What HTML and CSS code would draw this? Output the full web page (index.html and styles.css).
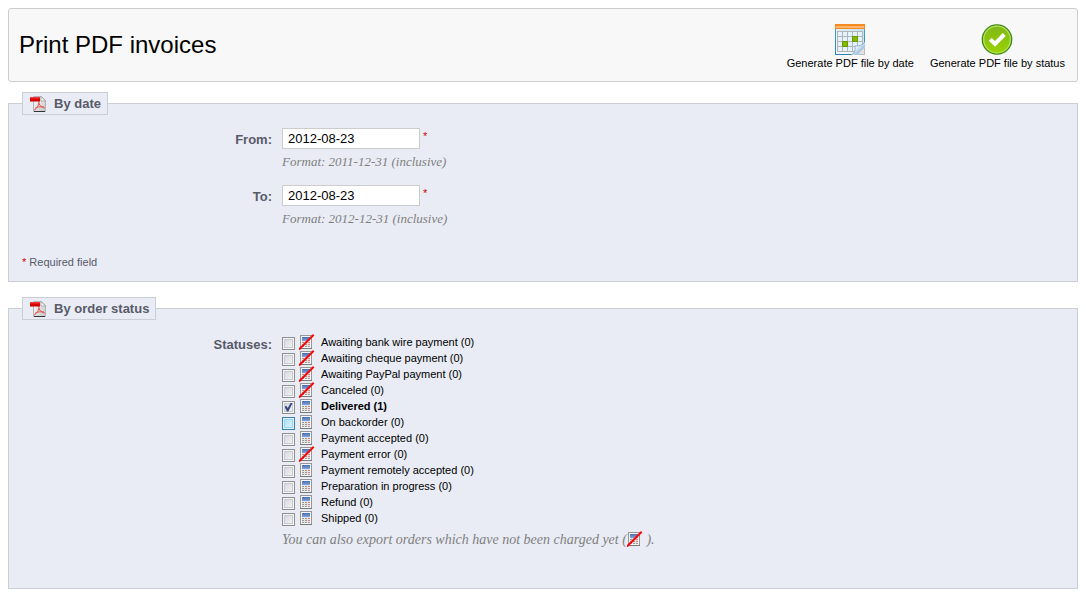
FILE: index.html
```html
<!DOCTYPE html>
<html lang="en">
<head>
<meta charset="utf-8">
<title>Print PDF invoices</title>
<link rel="stylesheet" href="styles.css">
</head>
<body>
<svg class="sprite" aria-hidden="true">
  <defs>
    <linearGradient id="paper" x1="0" y1="0" x2="1" y2="1"><stop offset="0" stop-color="#fff"/><stop offset="1" stop-color="#c4c4c4"/></linearGradient>
    <linearGradient id="red" x1="0" y1="0" x2="0" y2="1"><stop offset="0" stop-color="#f04a4a"/><stop offset=".5" stop-color="#e30000"/><stop offset="1" stop-color="#b80000"/></linearGradient>
    <linearGradient id="blue" x1="0" y1="0" x2="0" y2="1"><stop offset="0" stop-color="#426fb8"/><stop offset="1" stop-color="#86a5d8"/></linearGradient>
    <linearGradient id="frame" x1="0" y1="0" x2="0" y2="1"><stop offset="0" stop-color="#4a9fd0"/><stop offset="1" stop-color="#2381bb"/></linearGradient>
    <linearGradient id="sheet" x1="0" y1="1" x2="1" y2="0"><stop offset="0" stop-color="#fff"/><stop offset="1" stop-color="#bfe0f5"/></linearGradient>
    <linearGradient id="curl" x1="0" y1="0" x2="1" y2="1"><stop offset=".1" stop-color="#b4d3ea"/><stop offset=".35" stop-color="#ffffff"/><stop offset=".65" stop-color="#a5c6df"/></linearGradient>
    <linearGradient id="green" x1="0" y1="0" x2="0" y2="1"><stop offset="0" stop-color="#7fb61a"/><stop offset="1" stop-color="#9ad400"/></linearGradient>
  </defs>
  <symbol id="pdf" viewBox="0 0 16 16">
    <path d="M3.500 .5h8l4 4v11h-12z" fill="url(#paper)" stroke="#b4b4b4"/>
    <path d="M4 15.500h11" stroke="#333"/>
    <path d="M11 .5l4.500 4.500h-4.500z" fill="#fff" stroke="#999" stroke-width=".8"/>
    <path d="M9 5c0 4-2 7.500-5 9.200M8.800 7c1 3 3 4.700 6 5M5 12.500c2-1.500 5-2.200 9-1.500" fill="none" stroke="#e25555" stroke-width="1"/>
    <path d="M0 1h10v4.500h-10z" fill="url(#red)"/>
  </symbol>
  <symbol id="calc" viewBox="0 0 16 16">
    <rect x="1.500" y="1.500" width="11" height="13" fill="#e4e4e4" stroke="#979797"/>
    <path d="M2.500 2.500h9v11h-9z" fill="none" stroke="#f7f7f7"/>
    <path d="M1 14.500h12" stroke="#777"/>
    <rect x="3" y="3" width="8" height="4" fill="url(#blue)"/>
    <path d="M3 8h2v1h-2zM6 8h2v1h-2zM3 10h2v1h-2zM6 10h2v1h-2zM3 12h2v1h-2zM6 12h2v1h-2zM9 12h2v1h-2z" fill="#999"/>
    <path d="M9 8h2v1h-2zM9 10h2v1h-2z" fill="#e58080"/>
  </symbol>
  <symbol id="nocalc" viewBox="0 0 16 16">
    <use href="#calc"/>
    <path d="M.5 15L14 1.500" stroke="#f80808" stroke-width="2" stroke-linecap="square"/>
  </symbol>
</svg>

<header class="toolbar">
  <h1 class="title">Print PDF invoices</h1>
  <nav class="actions">
    <a class="action" href="#by-date">
      <svg class="action-icon" viewBox="0 0 32 32" aria-hidden="true">
        <path d="M1.500 4v26.500h29v-26.500z" fill="url(#sheet)" stroke="url(#frame)"/>
        <path d="M3 7h26v21h-26z" fill="#b0b5ba"/>
        <path d="M4 8h4v4h-4zM9 8h4v4h-4zM14 8h4v4h-4zM19 8h4v4h-4zM24 8h4v4h-4zM4 13h4v4h-4zM9 13h4v4h-4zM14 13h4v4h-4zM24 13h4v4h-4zM4 18h4v4h-4zM14 18h4v4h-4zM19 18h4v4h-4zM24 18h4v4h-4zM4 23h4v4h-4zM9 23h4v4h-4zM14 23h4v4h-4zM19 23h4v4h-4z" fill="#e4f3fc"/>
        <path d="M18.500 12.500h5v5h-5zM8.500 17.500h5v5h-5z" fill="#86b800" stroke="#659a00"/>
        <path d="M17 31l14-13v13z" fill="#dfe1e2"/>
        <path d="M17 31c3-1 4.500-4 4-9 4 .5 7.500-1 10-4v5L23 31z" fill="url(#curl)"/>
        <path d="M17 31c3-1 4.500-4 4-9 4 .5 7.500-1 10-4" fill="none" stroke="#7aa7ca" stroke-width=".8"/>
        <path d="M24 30.500h6.500v-7" fill="none" stroke="#b9bdbf"/>
        <rect x="1" y="0" width="30" height="5" fill="#f58a1f"/>
        <rect x="2" y="2" width="28" height="2" fill="#ffb56b"/>
      </svg>
      Generate PDF file by date
    </a>
    <a class="action" href="#by-status">
      <svg class="action-icon" viewBox="0 0 32 32" aria-hidden="true">
        <circle cx="16" cy="15.500" r="14.700" fill="url(#green)" stroke="#3f8a18" stroke-width="1.300"/>
        <circle cx="16" cy="15.500" r="13.300" fill="none" stroke="#b5df62" stroke-width="1.200"/>
        <path d="M9.300 15.300l4.700 4.700 9.300-9.500" fill="none" stroke="#fff" stroke-width="4"/>
      </svg>
      Generate PDF file by status
    </a>
  </nav>
</header>

<form>
  <fieldset class="panel" id="by-date">
    <legend class="legend"><svg class="icon" aria-hidden="true"><use href="#pdf"/></svg>By date</legend>
    <div class="row">
      <label class="label" for="from">From:</label>
      <div class="field">
        <div class="control"><input class="text" id="from" type="text" value="2012-08-23"><sup class="star">*</sup></div>
        <p class="hint">Format: 2011-12-31 (inclusive)</p>
      </div>
    </div>
    <div class="row">
      <label class="label" for="to">To:</label>
      <div class="field">
        <div class="control"><input class="text" id="to" type="text" value="2012-08-23"><sup class="star">*</sup></div>
        <p class="hint">Format: 2012-12-31 (inclusive)</p>
      </div>
    </div>
    <p class="required"><sup class="star">*</sup> Required field</p>
  </fieldset>

  <fieldset class="panel panel-status" id="by-status">
    <legend class="legend"><svg class="icon" aria-hidden="true"><use href="#pdf"/></svg>By order status</legend>
    <div class="row">
      <span class="label" id="statuses">Statuses:</span>
      <div class="field" role="group" aria-labelledby="statuses">
        <ul class="statuses">
          <li><label class="status"><input class="check" type="checkbox"><svg class="icon" aria-hidden="true"><use href="#nocalc"/></svg>Awaiting bank wire payment (0)</label></li>
          <li><label class="status"><input class="check" type="checkbox"><svg class="icon" aria-hidden="true"><use href="#nocalc"/></svg>Awaiting cheque payment (0)</label></li>
          <li><label class="status"><input class="check" type="checkbox"><svg class="icon" aria-hidden="true"><use href="#nocalc"/></svg>Awaiting PayPal payment (0)</label></li>
          <li><label class="status"><input class="check" type="checkbox"><svg class="icon" aria-hidden="true"><use href="#nocalc"/></svg>Canceled (0)</label></li>
          <li><label class="status status-on"><input class="check" type="checkbox" checked><svg class="icon" aria-hidden="true"><use href="#calc"/></svg>Delivered (1)</label></li>
          <li><label class="status"><input class="check check-hot" type="checkbox"><svg class="icon" aria-hidden="true"><use href="#calc"/></svg>On backorder (0)</label></li>
          <li><label class="status"><input class="check" type="checkbox"><svg class="icon" aria-hidden="true"><use href="#calc"/></svg>Payment accepted (0)</label></li>
          <li><label class="status"><input class="check" type="checkbox"><svg class="icon" aria-hidden="true"><use href="#nocalc"/></svg>Payment error (0)</label></li>
          <li><label class="status"><input class="check" type="checkbox"><svg class="icon" aria-hidden="true"><use href="#calc"/></svg>Payment remotely accepted (0)</label></li>
          <li><label class="status"><input class="check" type="checkbox"><svg class="icon" aria-hidden="true"><use href="#calc"/></svg>Preparation in progress (0)</label></li>
          <li><label class="status"><input class="check" type="checkbox"><svg class="icon" aria-hidden="true"><use href="#calc"/></svg>Refund (0)</label></li>
          <li><label class="status"><input class="check" type="checkbox"><svg class="icon" aria-hidden="true"><use href="#calc"/></svg>Shipped (0)</label></li>
        </ul>
        <p class="hint hint-status">You can also export orders which have not been charged yet (<svg class="icon icon-inline" aria-hidden="true"><use href="#nocalc"/></svg> ).</p>
      </div>
    </div>
  </fieldset>
</form>
</body>
</html>
```

FILE: styles.css
```css
* {
  box-sizing: border-box;
}

body {
  margin: 8px;
  background: #fff;
  color: #000;
  font: 11px/16px "Liberation Sans", Arial, sans-serif;
}

p,
ul {
  margin: 0;
  padding: 0;
}

.sprite {
  position: absolute;
  width: 0;
  height: 0;
}

.toolbar {
  display: flex;
  justify-content: space-between;
  align-items: center;
  padding: 12px 12px 8px 10px;
  border: 1px solid #ccc;
  border-radius: 3px;
  background: #f8f8f8;
}

.title {
  margin: 0 0 4px;
  font-size: 24px;
  font-weight: 400;
  line-height: 32px;
}

.actions {
  display: flex;
  gap: 16px;
}

.action {
  display: flex;
  flex-direction: column;
  align-items: center;
  padding: 3px 0 2px;
  color: #000;
  line-height: 15px;
  text-decoration: none;
}

.action-icon {
  width: 32px;
  height: 32px;
}

.panel {
  min-width: 0;
  margin: 10px 0 0;
  padding: 13px 13px 11px;
  border: 1px solid #ccced7;
  background: #e9ecf4;
}

.panel-status {
  margin-top: 15px;
  padding-bottom: 25px;
}

.legend {
  display: flex;
  align-items: center;
  gap: 8px;
  padding: 3px 6px 2px 7px;
  border: 1px solid #ccced7;
  background: #e9ecf4;
  color: #585a69;
  font-size: 13px;
  font-weight: 700;
}

.icon {
  flex: none;
  width: 16px;
  height: 16px;
}

.row {
  display: flex;
  gap: 10px;
}

.label {
  width: 250px;
  padding-top: 4px;
  color: #585a69;
  font-size: 13px;
  font-weight: 700;
  text-align: right;
}

.field {
  flex: 1;
  padding-bottom: 15px;
}

.control {
  display: flex;
  gap: 3px;
}

.text {
  width: 138px;
  height: 21px;
  padding: 0 5px;
  border: 1px solid #ccc;
  background: #fff;
  color: #000;
  font: 13px "Liberation Sans", Arial, sans-serif;
}

.star {
  color: #c00;
  font-size: 11px;
  line-height: 16px;
  vertical-align: baseline;
}

.hint {
  padding-top: 5px;
  color: #7f7f7f;
  font: italic 13px/16px Georgia, "Liberation Serif", serif;
}

.required {
  padding-top: 12px;
  color: #585a69;
}

.statuses {
  padding-top: 1px;
  list-style: none;
}

.status {
  display: flex;
  align-items: center;
  gap: 4px;
  width: fit-content;
}

.status .icon {
  margin-right: 2px;
}

.status-on {
  font-weight: 700;
}

.check {
  appearance: none;
  display: grid;
  place-items: center;
  width: 13px;
  height: 13px;
  margin: 2px 0 0;
  border: 1px solid #8e8f8f;
  background: linear-gradient(135deg, #cfd2d8, #f8f8f8);
  box-shadow: inset 0 0 0 1px #f4f4f4, inset 0 0 0 2px #c8cbd1;
}

.check-hot {
  border-color: #3c7fb1;
  background: linear-gradient(135deg, #a3dcfa, #e6f6fe);
  box-shadow: inset 0 0 0 1px #def4fe, inset 0 0 0 2px #9bd5f3;
}

.check:checked::after {
  content: "";
  width: 8px;
  height: 9px;
  background: #3a4b84;
  clip-path: polygon(0 45%, 22% 35%, 40% 62%, 80% 0, 100% 8%, 48% 100%, 30% 100%);
}

.hint-status {
  font-size: 14px;
}

.icon-inline {
  vertical-align: -3px;
}
```
